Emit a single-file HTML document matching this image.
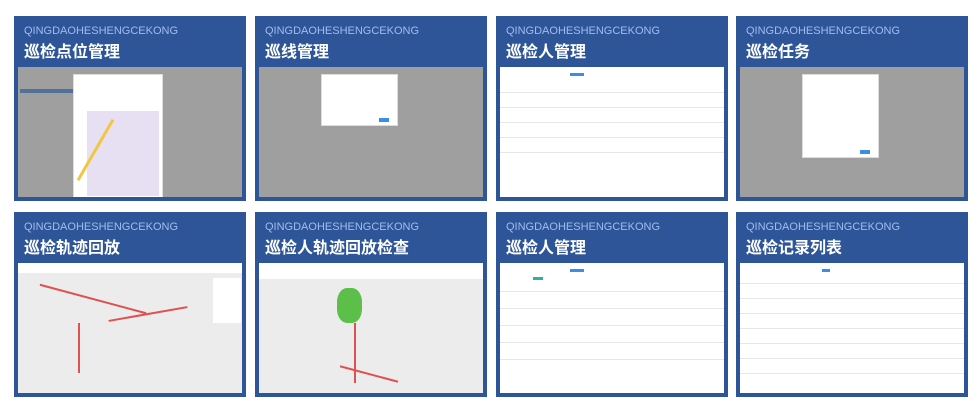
<!DOCTYPE html><html><head><meta charset="utf-8"><style>
body{margin:0;width:977px;height:410px;background:#fff;position:relative;overflow:hidden;font-family:"Liberation Sans","Noto Sans CJK SC",sans-serif}
.c{position:absolute;width:232px;height:185px;background:#2e5597}
.c .en{position:absolute;left:10px;top:9px;font-size:11px;color:#9fbdf0;letter-spacing:0}
.c .t{position:absolute;left:10px;top:22px;font-size:16px;font-weight:bold;color:#fff}
.th{position:absolute;left:4px;top:51px;width:224px;height:130px;overflow:hidden;background:#fff}
.dim{position:absolute;inset:0;background:rgba(90,90,90,.55)}
.modal{position:absolute;background:#fff;border:1px solid #ddd}
.row{position:absolute;left:0;right:0;height:1px;background:#e6e6e6}
.map{background:#ececec}
.road{position:absolute;background:#e05050}
</style></head><body>
<!-- row1 -->
<div class="c" style="left:14px;top:16px"><div class="en">QINGDAOHESHENGCEKONG</div><div class="t">巡检点位管理</div>
<div class="th" style="background:#f4f4f4"><div style="position:absolute;left:2px;top:22px;width:60px;height:4px;background:#4a8fe0"></div>
<div class="dim"></div><div class="modal" style="left:55px;top:7px;width:88px;height:125px"><div style="position:absolute;left:13px;top:36px;width:72px;height:85px;background:#e6e0f2"></div><div style="position:absolute;left:20px;top:40px;width:3px;height:70px;background:#f2c740;transform:rotate(30deg)"></div></div></div></div>
<div class="c" style="left:255px;top:16px"><div class="en">QINGDAOHESHENGCEKONG</div><div class="t">巡线管理</div>
<div class="th" style="background:#f4f4f4"><div class="dim"></div><div class="modal" style="left:62px;top:7px;width:75px;height:50px"><div style="position:absolute;right:8px;bottom:3px;width:10px;height:4px;background:#3a8ee6"></div></div></div></div>
<div class="c" style="left:496px;top:16px"><div class="en">QINGDAOHESHENGCEKONG</div><div class="t">巡检人管理</div>
<div class="th"><div style="position:absolute;left:70px;top:6px;width:14px;height:3px;background:#3a8ee6"></div><div class="row" style="top:25px"></div><div class="row" style="top:40px"></div><div class="row" style="top:55px"></div><div class="row" style="top:70px"></div><div class="row" style="top:85px"></div></div></div>
<div class="c" style="left:736px;top:16px"><div class="en">QINGDAOHESHENGCEKONG</div><div class="t">巡检任务</div>
<div class="th" style="background:#f4f4f4"><div class="dim"></div><div class="modal" style="left:62px;top:7px;width:75px;height:82px"><div style="position:absolute;right:8px;bottom:3px;width:10px;height:4px;background:#3a8ee6"></div></div></div></div>
<!-- row2 -->
<div class="c" style="left:14px;top:212px"><div class="en">QINGDAOHESHENGCEKONG</div><div class="t">巡检轨迹回放</div>
<div class="th map"><div style="position:absolute;left:0;top:0;right:0;height:10px;background:#fff"></div><div class="road" style="left:20px;top:35px;width:110px;height:2px;transform:rotate(15deg)"></div><div class="road" style="left:60px;top:60px;width:2px;height:50px"></div><div class="road" style="left:90px;top:50px;width:80px;height:2px;transform:rotate(-10deg)"></div><div style="position:absolute;left:195px;top:15px;width:28px;height:45px;background:#fff"></div></div></div>
<div class="c" style="left:255px;top:212px"><div class="en">QINGDAOHESHENGCEKONG</div><div class="t">巡检人轨迹回放检查</div>
<div class="th map"><div style="position:absolute;left:0;top:0;right:0;height:16px;background:#fff"></div><div style="position:absolute;left:78px;top:25px;width:25px;height:35px;background:#5cbf4a;border-radius:40%"></div><div class="road" style="left:95px;top:60px;width:2px;height:60px"></div><div class="road" style="left:80px;top:110px;width:60px;height:2px;transform:rotate(15deg)"></div></div></div>
<div class="c" style="left:496px;top:212px"><div class="en">QINGDAOHESHENGCEKONG</div><div class="t">巡检人管理</div>
<div class="th"><div style="position:absolute;left:70px;top:6px;width:14px;height:3px;background:#3a8ee6"></div><div style="position:absolute;left:33px;top:14px;width:10px;height:3px;background:#2bb39a"></div><div class="row" style="top:28px"></div><div class="row" style="top:45px"></div><div class="row" style="top:62px"></div><div class="row" style="top:79px"></div><div class="row" style="top:96px"></div></div></div>
<div class="c" style="left:736px;top:212px"><div class="en">QINGDAOHESHENGCEKONG</div><div class="t">巡检记录列表</div>
<div class="th"><div style="position:absolute;left:82px;top:6px;width:8px;height:3px;background:#3a8ee6"></div><div class="row" style="top:20px"></div><div class="row" style="top:35px"></div><div class="row" style="top:50px"></div><div class="row" style="top:65px"></div><div class="row" style="top:80px"></div><div class="row" style="top:95px"></div><div class="row" style="top:110px"></div></div></div>
</body></html>
